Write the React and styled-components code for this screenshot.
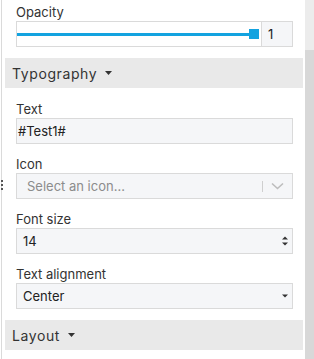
import React from "react";
import styled, { createGlobalStyle } from "styled-components";

const Global = createGlobalStyle`
  html, body { margin: 0; padding: 0; background: #fff; }
  body { font-family: Inter, "Noto Sans", sans-serif; color: #333; }
  * { box-sizing: border-box; }
`;

const Frame = styled.div`
  display: flex;
  width: 314px;
  height: 359px;
  overflow: hidden;
  background: #fff;
`;

const Rail = styled.div`
  position: relative;
  flex: none;
  width: 4px;
  margin-left: 1px;
  border-left: 1px solid #dadada;
`;

const Handle = styled.div`
  position: absolute;
  left: -1px;
  top: 180px;
  display: flex;
  flex-direction: column;
  gap: 2px;
  & > span {
    display: block;
    width: 2px;
    height: 2px;
    background: #555;
  }
`;

const Panel = styled.div`
  flex: none;
  width: 298px;
  display: flex;
  flex-direction: column;
`;

const Gutter = styled.div`
  flex: none;
  width: 2px;
`;

const Scrollbar = styled.div`
  flex: none;
  width: 9px;
  display: flex;
  flex-direction: column;
  background: #ececec;
`;

const Thumb = styled.div`
  margin-top: 50px;
  flex: 1;
  background: #d8d8d8;
`;

const Body = styled.div`
  padding: ${(p) => p.$top}px 10px 0 11px;
`;

const Header = styled.div`
  height: 30px;
  flex: none;
  display: flex;
  align-items: center;
  gap: 8px;
  padding-left: 7px;
  background: #e9e9e9;
  font-size: 14px;
  letter-spacing: 0.6px;
  color: #333;
`;

const Field = styled.div`
  margin-bottom: 11px;
`;

const Label = styled.div`
  font-size: 13px;
  line-height: 18px;
  color: #333;
`;

const Control = styled.div`
  height: 26px;
  display: flex;
  align-items: center;
  border: 1px solid #dadada;
  background: ${(p) => (p.$white ? "#fff" : "#f5f6f8")};
  padding: 0 ${(p) => p.$pr ?? 0}px 0 ${(p) => p.$pl ?? 0}px;
  font-size: 13px;
  color: ${(p) => (p.$muted ? "#8c8c8c" : "#222")};
`;

const Value = styled.span`
  flex: 1;
  white-space: nowrap;
`;

const SliderArea = styled.div`
  flex: 1;
  align-self: stretch;
  display: flex;
  align-items: center;
  padding-right: 2px;
  background: #fff;
`;

const Track = styled.div`
  flex: 1;
  height: 3px;
  background: #13a3e0;
`;

const Knob = styled.div`
  width: 10px;
  height: 10px;
  margin-left: -1px;
  background: #13a3e0;
`;

const NumberBox = styled.div`
  width: 31px;
  align-self: stretch;
  display: flex;
  align-items: center;
  padding-left: 6px;
  border-left: 1px solid #dadada;
  background: #f5f6f8;
  font-size: 13px;
  color: #222;
`;

const Separator = styled.span`
  width: 1px;
  height: 11px;
  background: #cfcfcf;
  margin-right: 8px;
`;

const Caret = () => (
  <svg width="7" height="4" viewBox="0 0 7 4">
    <path d="M0 0 L7 0 L3.5 4 Z" fill="#333" />
  </svg>
);

const SmallCaret = () => (
  <svg width="6" height="4" viewBox="0 0 6 4" style={{ marginRight: 4 }}>
    <path d="M0 0.5 L6 0.5 L3 3.5 Z" fill="#333" />
  </svg>
);

const Spinner = () => (
  <svg width="6" height="10" viewBox="0 0 6 10" style={{ marginRight: 4 }}>
    <path d="M0 3.5 L6 3.5 L3 0.5 Z" fill="#333" />
    <path d="M0 6.5 L6 6.5 L3 9.5 Z" fill="#333" />
  </svg>
);

const Chevron = () => (
  <svg width="13" height="8" viewBox="0 0 13 8" style={{ marginRight: 8 }}>
    <path d="M1 1.5 L6.5 6.5 L12 1.5" fill="none" stroke="#bdbdbd" strokeWidth="1.6" />
  </svg>
);

export default function App() {
  return (
    <>
      <Global />
      <Frame>
        <Rail>
          <Handle>
            <span />
            <span />
            <span />
          </Handle>
        </Rail>
        <Panel>
          <Body $top={3}>
            <Field>
              <Label>Opacity</Label>
              <Control $white>
                <SliderArea>
                  <Track />
                  <Knob />
                </SliderArea>
                <NumberBox>1</NumberBox>
              </Control>
            </Field>
          </Body>
          <Header>
            Typography <Caret />
          </Header>
          <Body $top={12}>
            <Field>
              <Label>Text</Label>
              <Control $pl={1}>
                <Value>#Test1#</Value>
              </Control>
            </Field>
            <Field>
              <Label>Icon</Label>
              <Control $pl={10} $muted>
                <Value>Select an icon...</Value>
                <Separator />
                <Chevron />
              </Control>
            </Field>
            <Field>
              <Label>Font size</Label>
              <Control $pl={6}>
                <Value>14</Value>
                <Spinner />
              </Control>
            </Field>
            <Field>
              <Label>Text alignment</Label>
              <Control $pl={6}>
                <Value>Center</Value>
                <SmallCaret />
              </Control>
            </Field>
          </Body>
          <Header>
            Layout <Caret />
          </Header>
        </Panel>
        <Gutter />
        <Scrollbar>
          <Thumb />
        </Scrollbar>
      </Frame>
    </>
  );
}
